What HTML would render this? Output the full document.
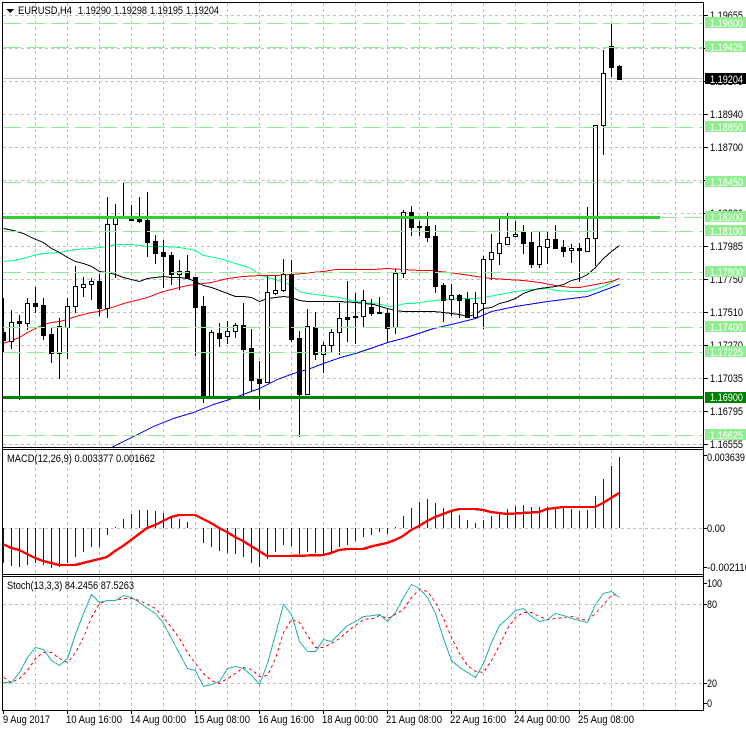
<!DOCTYPE html>
<html><head><meta charset="utf-8"><title>EURUSD,H4</title>
<style>
html,body{margin:0;padding:0;background:#fff;width:746px;height:731px;overflow:hidden}
svg{display:block}
text{font-family:"Liberation Sans",sans-serif;font-size:11px;fill:#000}
.w{fill:#fff}
</style></head><body>
<svg width="746" height="731" viewBox="0 0 746 731" xmlns="http://www.w3.org/2000/svg">
<rect width="746" height="731" fill="#fff"/>
<g shape-rendering="crispEdges" fill="none">
<!-- vertical grid -->
<path stroke="#c0c0c0" stroke-dasharray="3 3" d="M35.5 3V447M67.5 3V447M99.5 3V447M131.5 3V447M163.5 3V447M195.5 3V447M227.5 3V447M259.5 3V447M291.5 3V447M323.5 3V447M355.5 3V447M387.5 3V447M419.5 3V447M451.5 3V447M483.5 3V447M515.5 3V447M547.5 3V447M579.5 3V447M611.5 3V447M643.5 3V447M675.5 3V447
M35.5 450V574M67.5 450V574M99.5 450V574M131.5 450V574M163.5 450V574M195.5 450V574M227.5 450V574M259.5 450V574M291.5 450V574M323.5 450V574M355.5 450V574M387.5 450V574M419.5 450V574M451.5 450V574M483.5 450V574M515.5 450V574M547.5 450V574M579.5 450V574M611.5 450V574M643.5 450V574M675.5 450V574
M35.5 577V710M67.5 577V710M99.5 577V710M131.5 577V710M163.5 577V710M195.5 577V710M227.5 577V710M259.5 577V710M291.5 577V710M323.5 577V710M355.5 577V710M387.5 577V710M419.5 577V710M451.5 577V710M483.5 577V710M515.5 577V710M547.5 577V710M579.5 577V710M611.5 577V710M643.5 577V710M675.5 577V710"/>
<!-- horizontal grid -->
<path stroke="#c0c0c0" stroke-dasharray="3 3" d="M3 15.5H703M3 48.5H703M3 81.5H703M3 114.5H703M3 147.5H703M3 180.5H703M3 213.5H703M3 246.5H703M3 279.5H703M3 312.5H703M3 345.5H703M3 378.5H703M3 411.5H703M3 444.5H703M3 528.5H703M3 604.5H703M3 683.5H703"/>
<path stroke="#c0c0c0" d="M3 78.5H703"/>
<!-- moving averages -->
<polyline transform="translate(.5 .5)" stroke="#00ff7f" points="3,261 13,260 23,258 33,255 43,253 59,252 75,249 91,248 107,246 115,244 131,244 147,246 163,246 179,247 195,250 203,255 219,258 235,263 251,268 259,274 267,277 275,279 283,282 291,285 299,291 307,293 323,295 339,297 355,301 373,303 381,304 389,306 397,305 405,303 413,303 426,301 443,299 459,298 475,298 483,297 499,294 515,291 531,289 547,288 555,290 571,291 587,291 603,286 611,282 619,278"/>
<polyline transform="translate(.5 .5)" stroke="#ff0000" points="3,343 11,340 19,337 27,332 35,328 43,324 51,322 59,321 67,319 75,316 83,314 91,312 99,311 107,308 115,306 123,303 131,301 139,299 147,297 155,294 163,291 171,289 179,287 187,285 195,284 203,283 211,282 219,280 227,278 235,277 243,276 259,275 275,275 291,274 303,273 311,272 323,271 335,269 373,269 386,268 403,269 420,270 430,270 448,272 456,273 483,277 491,278 506,279 523,280 539,282 555,285 571,287 579,287 595,284 611,281 619,278"/>
<polyline transform="translate(.5 .5)" stroke="#000" points="3,228 13,230 23,233 33,238 43,242 51,248 59,252 67,257 75,261 83,263 91,266 99,271 107,272 115,274 123,277 131,279 139,281 147,278 155,277 163,276 171,277 179,277 187,278 195,281 203,285 211,287 219,290 227,293 235,296 243,296 251,297 259,301 267,298 275,297 283,296 291,297 299,300 307,301 323,301 339,301 355,302 373,304 387,308 395,310 403,311 416,311 433,311 443,312 451,313 459,314 467,316 475,314 483,308 491,307 499,303 507,301 515,298 523,293 531,290 539,288 547,287 555,286 563,284 571,280 579,278 587,274 595,267 603,258 611,251 619,245"/>
<polyline transform="translate(.5 .5)" stroke="#0000ff" points="111,447 133,436 153,426 173,418 193,412 213,404 229,399 237,396 259,388 277,379 293,373 310,368 323,363 340,357 355,353 373,347 387,342 406,337 433,328 451,324 475,318 491,311 515,306 547,301 571,298 587,296 603,290 619,284"/>
<!-- wicks -->
<path stroke="#000" d="M3.5 298V353M11.5 310V349M19.5 315V400M27.5 298V330M35.5 287V313M43.5 298V340M51.5 327V363M59.5 318V379M67.5 298V359M75.5 266V313M83.5 277V297M91.5 278V300M99.5 274V316M107.5 197V318M115.5 204V278M123.5 182V218M131.5 205V221M139.5 197V223M147.5 192V257M155.5 235V264M163.5 240V288M171.5 252V285M179.5 260V290M187.5 255V278M195.5 277V356M203.5 296V403M211.5 330V397M219.5 323V347M227.5 321V344M235.5 323V338M243.5 303V397M251.5 329V391M259.5 361V410M267.5 275V382M275.5 275V295M283.5 259V292M291.5 260V342M299.5 331V437M307.5 309V395M315.5 312V360M323.5 342V373M331.5 329V352M339.5 303V355M347.5 281V342M355.5 293V344M363.5 290V328M371.5 299V316M379.5 297V313M387.5 308V342M395.5 269V334M403.5 210V278M411.5 206V236M419.5 221V236M427.5 212V242M435.5 225V293M443.5 283V322M451.5 284V316M459.5 294V318M467.5 292V317M475.5 292V319M483.5 256V329M491.5 234V280M499.5 218V265M507.5 213V245M515.5 221V237M523.5 225V254M531.5 231V268M539.5 231V268M547.5 231V264M555.5 225V249M563.5 240V257M571.5 244V263M579.5 243V282M587.5 207V252M595.5 125V266M603.5 50V155M611.5 24V77M619.5 65V80"/>
<!-- white bodies -->
<path stroke="#000" fill="#fff" d="M9.5 322.5h4v19h-4zM25.5 303.5h4v20h-4zM57.5 326.5h4v27h-4zM65.5 306.5h4v21h-4zM73.5 286.5h4v20h-4zM81.5 284.5h4v3h-4zM89.5 281.5h4v3h-4zM105.5 224.5h4v84h-4zM113.5 217.5h4v7h-4zM177.5 271.5h4v3h-4zM209.5 332.5h4v64h-4zM225.5 331.5h4v5h-4zM233.5 325.5h4v6h-4zM265.5 292.5h4v90h-4zM273.5 290.5h4v3h-4zM281.5 274.5h4v16h-4zM305.5 326.5h4v68h-4zM321.5 345.5h4v9h-4zM329.5 332.5h4v13h-4zM337.5 318.5h4v14h-4zM361.5 300.5h4v16h-4zM393.5 273.5h4v54h-4zM401.5 212.5h4v61h-4zM449.5 295.5h4v4h-4zM473.5 303.5h4v14h-4zM481.5 259.5h4v44h-4zM489.5 252.5h4v7h-4zM497.5 243.5h4v10h-4zM505.5 237.5h4v7h-4zM513.5 234.5h4v2h-4zM537.5 246.5h4v18h-4zM545.5 239.5h4v8h-4zM569.5 248.5h4v2h-4zM585.5 238.5h4v13h-4zM593.5 125.5h4v113h-4zM601.5 73.5h4v52h-4z"/>
<!-- black bodies -->
<path stroke="#000" fill="#000" d="M3.5 332.5h2v8h-2zM17.5 321.5h4v2h-4zM33.5 303.5h4v3h-4zM41.5 305.5h4v30h-4zM49.5 334.5h4v19h-4zM97.5 281.5h4v27h-4zM121.5 217.5h4v1h-4zM129.5 216.5h4v4h-4zM137.5 219.5h4v2h-4zM145.5 220.5h4v22h-4zM153.5 241.5h4v12h-4zM161.5 252.5h4v4h-4zM169.5 255.5h4v19h-4zM185.5 271.5h4v7h-4zM193.5 277.5h4v30h-4zM201.5 306.5h4v90h-4zM217.5 333.5h4v5h-4zM241.5 325.5h4v24h-4zM249.5 348.5h4v32h-4zM257.5 379.5h4v4h-4zM289.5 274.5h4v65h-4zM297.5 338.5h4v56h-4zM313.5 327.5h4v27h-4zM345.5 317.5h4v2h-4zM353.5 316.5h4v1h-4zM369.5 307.5h4v6h-4zM377.5 312.5h4v1h-4zM385.5 313.5h4v15h-4zM409.5 212.5h4v15h-4zM417.5 226.5h4v1h-4zM425.5 226.5h4v11h-4zM433.5 236.5h4v50h-4zM441.5 285.5h4v15h-4zM457.5 295.5h4v5h-4zM465.5 299.5h4v18h-4zM521.5 232.5h4v11h-4zM529.5 242.5h4v22h-4zM553.5 239.5h4v9h-4zM561.5 247.5h4v4h-4zM577.5 248.5h4v2h-4zM609.5 46.5h4v21h-4zM617.5 66.5h4v13h-4z"/>
<!-- levels -->
<path stroke="#90ee90" stroke-dasharray="18 6" d="M3 23.5H703M3 47.5H703M3 127.5H703M3 182.5H703M3 231.5H703M3 272.5H703M3 327.5H703M3 352.5H703M3 435.5H703"/>
<path stroke="#90ee90" stroke-dasharray="18 6" d="M660 217.5H703"/>
<rect x="3" y="216" width="657" height="3" fill="#32cd32"/>
<rect x="3" y="396" width="700" height="3" fill="#008000"/>
<!-- MACD histogram -->
<path stroke="#0000ff" d="M3.5 528V563M11.5 528V566M19.5 528V567M27.5 528V565M35.5 528V563M43.5 528V565M51.5 528V568M59.5 528V567M67.5 528V563M75.5 528V557M83.5 528V552M91.5 528V547M99.5 528V547M107.5 528V535M115.5 527V528M123.5 519V528M131.5 514V528M139.5 510V528M147.5 510V528M155.5 511V528M163.5 513V528M171.5 516V528M179.5 519V528M187.5 522V528M203.5 528V543M211.5 528V547M219.5 528V551M227.5 528V553M235.5 528V554M243.5 528V557M251.5 528V563M259.5 528V567M267.5 528V559M275.5 528V552M283.5 528V545M291.5 528V546M299.5 528V554M307.5 528V552M315.5 528V553M323.5 528V554M331.5 528V552M339.5 528V547M347.5 528V545M355.5 528V541M363.5 528V537M371.5 528V535M379.5 528V532M387.5 528V534M395.5 527V528M403.5 516V528M411.5 508V528M419.5 502V528M427.5 499V528M435.5 503V528M443.5 508V528M451.5 511V528M459.5 515V528M467.5 520V528M475.5 523V528M483.5 520V528M491.5 516V528M499.5 514V528M507.5 509V528M515.5 506V528M523.5 505V528M531.5 507V528M539.5 507V528M547.5 507V528M555.5 509V528M563.5 508V528M571.5 509V528M579.5 511V528M587.5 510V528M595.5 496V528M603.5 479V528M611.5 466V528M619.5 457V528"/>
<polyline stroke="#ff0000" stroke-width="2.4" points="3,544 11,548 19,550 27,554 35,558 43,561 51,563 59,565 75,565 83,563 91,561 99,559 107,557 115,551 123,546 131,540 139,534 147,528 155,525 163,521 171,517 179,515 195,515 203,519 211,523 219,528 227,532 235,537 243,541 251,546 259,551 267,556 291,556 323,555 331,553 339,550 347,549 363,549 373,546 387,543 395,540 403,536 411,530 419,526 427,521 435,517 443,514 451,511 459,509 475,509 483,510 491,512 507,514 523,513 539,512 547,509 563,507 595,507 603,503 611,498 619,493"/>
<!-- Stochastic -->
<polyline transform="translate(.5 .5)" stroke="#ff0000" stroke-dasharray="3 3" points="3,677 11,682 19,678 27,670 35,658 43,652 51,652 59,658 67,662 75,652 83,637 91,617 99,603 107,600 115,600 123,598 131,598 139,600 147,604 155,608 163,617 171,627 179,638 187,652 195,663 203,673 211,680 219,683 227,678 235,673 243,667 251,669 259,676 267,675 275,658 283,632 291,619 299,622 307,635 315,647 323,647 331,643 339,638 347,631 355,625 363,619 373,618 379,615 387,618 395,614 403,609 411,597 419,589 427,591 435,602 443,618 451,637 459,653 467,665 475,671 483,672 491,660 499,645 507,628 515,617 523,612 531,612 539,616 547,619 555,618 563,617 571,616 579,618 587,620 595,613 603,604 611,595 619,594"/>
<polyline transform="translate(.5 .5)" stroke="#20b2aa" points="3,682 11,682 19,672 27,657 35,647 43,649 51,660 59,665 67,658 75,634 83,613 91,594 99,602 107,600 115,600 123,595 131,597 139,602 147,608 155,613 163,623 171,638 179,653 187,668 195,670 203,686 211,684 219,681 227,668 235,666 243,668 251,675 259,684 267,663 275,634 283,604 291,614 299,641 307,651 315,651 323,639 331,641 339,633 347,625 355,621 363,616 373,615 379,614 387,621 395,612 403,597 411,584 419,588 427,597 435,613 443,638 451,660 459,667 467,672 475,677 483,663 491,642 499,625 507,618 515,610 523,608 531,616 539,621 547,619 555,613 563,615 571,618 579,620 587,622 595,604 603,593 611,591 619,597"/>
<!-- frame -->
<path stroke="#000" d="M2.5 2V711M2 2.5H704M703.5 2V711M2 447.5H704M2 449.5H704M2 574.5H704M2 576.5H704M2 710.5H704"/>
<!-- ticks -->
<path stroke="#000" d="M704 15.5h4M704 48.5h4M704 81.5h4M704 114.5h4M704 147.5h4M704 180.5h4M704 213.5h4M704 246.5h4M704 279.5h4M704 312.5h4M704 345.5h4M704 378.5h4M704 411.5h4M704 444.5h4M704 455.5h3M704 528.5h3M704 567.5h3M704 583.5h3M704 604.5h3M704 683.5h3M704 703.5h3M3.5 711v3M67.5 711v3M131.5 711v3M195.5 711v3M259.5 711v3M323.5 711v3M387.5 711v3M451.5 711v3M515.5 711v3M579.5 711v3"/>
<!-- header triangle -->
<path fill="#000" stroke="none" d="M6 9h8l-4 4z"/>
</g>
<!-- axis labels -->
<text x="710" y="19" textLength="33" lengthAdjust="spacingAndGlyphs">1.19655</text>
<text x="710" y="85" textLength="33" lengthAdjust="spacingAndGlyphs">1.19175</text>
<text x="710" y="118" textLength="33" lengthAdjust="spacingAndGlyphs">1.18940</text>
<text x="710" y="151" textLength="33" lengthAdjust="spacingAndGlyphs">1.18700</text>
<text x="710" y="217" textLength="33" lengthAdjust="spacingAndGlyphs">1.18220</text>
<text x="710" y="250" textLength="33" lengthAdjust="spacingAndGlyphs">1.17985</text>
<text x="710" y="283" textLength="33" lengthAdjust="spacingAndGlyphs">1.17750</text>
<text x="710" y="316" textLength="33" lengthAdjust="spacingAndGlyphs">1.17510</text>
<text x="710" y="349" textLength="33" lengthAdjust="spacingAndGlyphs">1.17270</text>
<text x="710" y="382" textLength="33" lengthAdjust="spacingAndGlyphs">1.17035</text>
<text x="710" y="415" textLength="33" lengthAdjust="spacingAndGlyphs">1.16795</text>
<text x="710" y="448" textLength="33" lengthAdjust="spacingAndGlyphs">1.16555</text>
<g fill="#90ee90" shape-rendering="crispEdges">
<rect x="705" y="17" width="41" height="11"/><rect x="705" y="41" width="41" height="11"/><rect x="705" y="121" width="41" height="11"/><rect x="705" y="176" width="41" height="11"/><rect x="705" y="211" width="41" height="11"/><rect x="705" y="225" width="41" height="11"/><rect x="705" y="266" width="41" height="11"/><rect x="705" y="321" width="41" height="11"/><rect x="705" y="346" width="41" height="11"/><rect x="705" y="429" width="41" height="11"/>
<rect x="705" y="392" width="41" height="11" fill="#008000"/>
<rect x="705" y="73" width="41" height="11" fill="#000"/>
</g>
<text class="w" x="710" y="27" textLength="33" lengthAdjust="spacingAndGlyphs">1.19600</text>
<text class="w" x="710" y="51" textLength="33" lengthAdjust="spacingAndGlyphs">1.19425</text>
<text class="w" x="710" y="83" textLength="33" lengthAdjust="spacingAndGlyphs">1.19204</text>
<text class="w" x="710" y="131" textLength="33" lengthAdjust="spacingAndGlyphs">1.18850</text>
<text class="w" x="710" y="186" textLength="33" lengthAdjust="spacingAndGlyphs">1.18450</text>
<text class="w" x="710" y="221" textLength="33" lengthAdjust="spacingAndGlyphs">1.18200</text>
<text class="w" x="710" y="235" textLength="33" lengthAdjust="spacingAndGlyphs">1.18100</text>
<text class="w" x="710" y="276" textLength="33" lengthAdjust="spacingAndGlyphs">1.17800</text>
<text class="w" x="710" y="331" textLength="33" lengthAdjust="spacingAndGlyphs">1.17400</text>
<text class="w" x="710" y="356" textLength="33" lengthAdjust="spacingAndGlyphs">1.17225</text>
<text class="w" x="710" y="401" textLength="33" lengthAdjust="spacingAndGlyphs">1.16900</text>
<text class="w" x="710" y="439" textLength="33" lengthAdjust="spacingAndGlyphs">1.16625</text>
<text x="707" y="461" textLength="38" lengthAdjust="spacingAndGlyphs">0.003639</text>
<text x="707" y="532" textLength="18" lengthAdjust="spacingAndGlyphs">0.00</text>
<text x="707" y="571" textLength="43" lengthAdjust="spacingAndGlyphs">-0.002116</text>
<text x="707" y="587" textLength="15" lengthAdjust="spacingAndGlyphs">100</text>
<text x="707" y="608" textLength="10" lengthAdjust="spacingAndGlyphs">80</text>
<text x="707" y="687" textLength="10" lengthAdjust="spacingAndGlyphs">20</text>
<text x="707" y="707" textLength="5" lengthAdjust="spacingAndGlyphs">0</text>
<!-- titles -->
<text x="18" y="14" textLength="54" lengthAdjust="spacingAndGlyphs">EURUSD,H4</text>
<text x="78" y="14" textLength="33" lengthAdjust="spacingAndGlyphs">1.19290</text>
<text x="114" y="14" textLength="33" lengthAdjust="spacingAndGlyphs">1.19298</text>
<text x="150" y="14" textLength="33" lengthAdjust="spacingAndGlyphs">1.19195</text>
<text x="186" y="14" textLength="33" lengthAdjust="spacingAndGlyphs">1.19204</text>
<text x="7" y="462" textLength="148" lengthAdjust="spacingAndGlyphs">MACD(12,26,9) 0.003377 0.001662</text>
<text x="7" y="589" textLength="127" lengthAdjust="spacingAndGlyphs">Stoch(13,3,3) 84.2456 87.5263</text>
<!-- dates -->
<text x="3" y="723" textLength="47" lengthAdjust="spacingAndGlyphs">9 Aug 2017</text>
<text x="66" y="723" textLength="56" lengthAdjust="spacingAndGlyphs">10 Aug 16:00</text>
<text x="130" y="723" textLength="56" lengthAdjust="spacingAndGlyphs">14 Aug 00:00</text>
<text x="194" y="723" textLength="56" lengthAdjust="spacingAndGlyphs">15 Aug 08:00</text>
<text x="258" y="723" textLength="56" lengthAdjust="spacingAndGlyphs">16 Aug 16:00</text>
<text x="322" y="723" textLength="56" lengthAdjust="spacingAndGlyphs">18 Aug 00:00</text>
<text x="386" y="723" textLength="56" lengthAdjust="spacingAndGlyphs">21 Aug 08:00</text>
<text x="450" y="723" textLength="56" lengthAdjust="spacingAndGlyphs">22 Aug 16:00</text>
<text x="514" y="723" textLength="56" lengthAdjust="spacingAndGlyphs">24 Aug 00:00</text>
<text x="578" y="723" textLength="56" lengthAdjust="spacingAndGlyphs">25 Aug 08:00</text>
</svg>
</body></html>
